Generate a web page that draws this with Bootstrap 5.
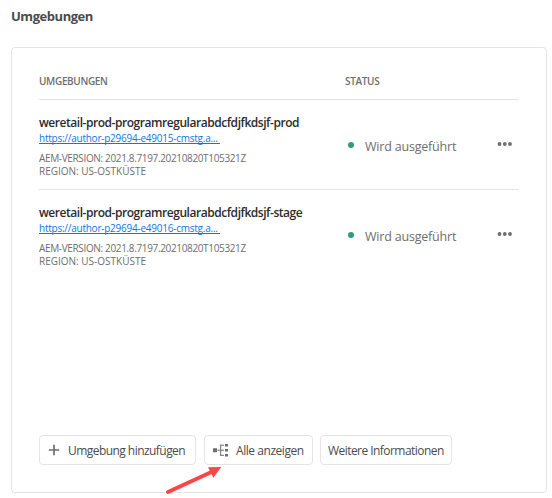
<!DOCTYPE html>
<html lang="de">
<head>
<meta charset="utf-8">
<meta name="viewport" content="width=device-width, initial-scale=1">
<title>Umgebungen</title>
<link rel="stylesheet" href="https://cdn.jsdelivr.net/npm/bootstrap@5.3.0/dist/css/bootstrap.min.css">
<style>
  body { font-family: "Open Sans", "Noto Sans", sans-serif; color: #4b4b4b; background: #fff; overflow: hidden; }
  .page { width: 552px; height: 498px; padding: 5px 5px 5px 11px; }
  .page-title { font-size: 13px; line-height: 22px; font-weight: 700; letter-spacing: -.46px; margin-bottom: 20px; }
  .env-card { height: 446px; padding: 22px 27px 27px; border: 1px solid #e4e4e4; border-radius: 4px; }
  .env-grid { display: grid; grid-template-columns: 306px 1fr 22px; border-bottom: 1px solid #e4e4e4; }
  .env-head { height: 30px; font-size: 10px; line-height: 22px; font-weight: 600; letter-spacing: -.34px; color: #6e6e6e; }
  .env-row { height: 90px; padding-top: 15px; }
  .env-row:last-child { border-bottom: 0; }
  .env-name { font-size: 12px; line-height: 16px; font-weight: 600; letter-spacing: -.455px; color: #2c2c2c; }
  .env-link { display: block; width: 181px; height: 13px; font-size: 10px; line-height: 14.500px; font-weight: 500; letter-spacing: -.24px; color: #1473e6; text-decoration: none; border-bottom: 1px solid #1473e6; }
  .env-meta { font-size: 10px; line-height: 13px; font-weight: 500; color: #6e6e6e; }
  .env-version { letter-spacing: -.35px; margin-top: 8px; }
  .env-status { padding: 23px 0 0 3px; font-size: 12.5px; line-height: 18px; letter-spacing: -.2px; color: #6e6e6e; }
  .status-dot { width: 6px; height: 6px; border-radius: 50%; background: #2d9d78; margin-right: 11px; }
  .env-more { padding-top: 26px; }
  .env-btn { --bs-btn-padding-x: 0; --bs-btn-padding-y: 0; --bs-btn-font-size: 12px; --bs-btn-border-color: #e4e4e4; --bs-btn-border-radius: 4px; --bs-btn-color: #4b4b4b; height: 30px; line-height: 28px; letter-spacing: -.55px; }
  .env-btn span { padding-top: 2px; }
  .env-add { width: 157px; padding-left: 8px; }
  .env-all { width: 109px; padding-left: 8px; letter-spacing: -.45px; }
  .env-info { width: 132px; padding-left: 7px; margin-left: -1px; }
  .pointer { position: absolute; left: 160px; top: 460px; pointer-events: none; }
</style>
</head>
<body>
<main class="page position-relative text-nowrap">
  <h1 class="page-title">Umgebungen</h1>
  <section class="env-card d-flex flex-column">
    <div class="env-grid env-head"><div>UMGEBUNGEN</div><div>STATUS</div></div>
    <div>
      <div class="env-grid env-row">
        <div>
          <div class="env-name">weretail-prod-programregularabdcfdjfkdsjf-prod</div>
          <a class="env-link" href="#">https://author-p29694-e49015-cmstg.a...</a>
          <div class="env-meta env-version">AEM-VERSION: 2021.8.7197.20210820T105321Z</div>
          <div class="env-meta">REGION: US-OSTKÜSTE</div>
        </div>
        <div class="env-status d-flex align-items-start"><span class="status-dot mt-1"></span>Wird ausgeführt</div>
        <div class="env-more"><svg class="d-block" width="16" height="6" fill="#6e6e6e"><circle cx="2.500" cy="3" r="1.900"/><circle cx="7.800" cy="3" r="1.900"/><circle cx="13" cy="3" r="1.900"/></svg></div>
      </div>
      <div class="env-grid env-row">
        <div>
          <div class="env-name">weretail-prod-programregularabdcfdjfkdsjf-stage</div>
          <a class="env-link" href="#">https://author-p29694-e49016-cmstg.a...</a>
          <div class="env-meta env-version">AEM-VERSION: 2021.8.7197.20210820T105321Z</div>
          <div class="env-meta">REGION: US-OSTKÜSTE</div>
        </div>
        <div class="env-status d-flex align-items-start"><span class="status-dot mt-1"></span>Wird ausgeführt</div>
        <div class="env-more"><svg class="d-block" width="16" height="6" fill="#6e6e6e"><circle cx="2.500" cy="3" r="1.900"/><circle cx="7.800" cy="3" r="1.900"/><circle cx="13" cy="3" r="1.900"/></svg></div>
      </div>
    </div>
    <div class="d-flex gap-2 mt-auto">
      <button type="button" class="btn env-btn env-add d-flex align-items-center"><svg width="12" height="12" stroke="#6e6e6e" stroke-width="1.7"><path d="M6 .8v10.400M.8 6h10.400"/></svg><span class="ms-2">Umgebung hinzufügen</span></button>
      <button type="button" class="btn env-btn env-all d-flex align-items-center"><svg width="15" height="14" fill="#6e6e6e"><path d="M0 5.200h4v4H0zM12 1h3v2.500h-3zM12 6h3v2.500h-3zM12 11h3v2.500h-3z"/><path d="M4.500 7.200h6.500M7.700 1.500v11.500M7.700 2.200H11M7.700 12.300H11" fill="none" stroke="#6e6e6e"/></svg><span class="ms-2">Alle anzeigen</span></button>
      <button type="button" class="btn env-btn env-info d-flex align-items-center"><span>Weitere Informationen</span></button>
    </div>
  </section>
  <svg class="pointer" width="64" height="36" fill="#fa4549"><path d="M61.200 6.900 53.400 17.800 48 7.200z"/><path d="M8 32 52 11.800" stroke="#fa4549" stroke-width="4" stroke-linecap="round"/></svg>
</main>
<script src="https://cdn.jsdelivr.net/npm/bootstrap@5.3.0/dist/js/bootstrap.bundle.min.js"></script>
</body>
</html>
